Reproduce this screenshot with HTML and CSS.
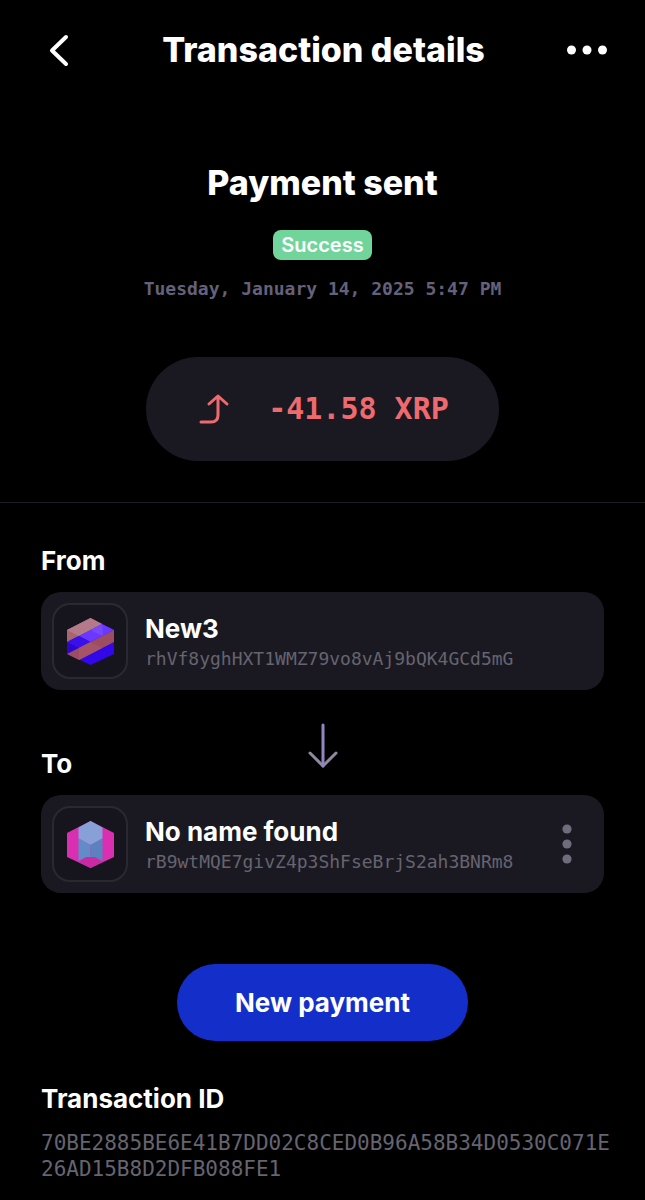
FILE: index.html
```html
<!DOCTYPE html>
<html lang="en">
<head>
<meta charset="utf-8">
<meta name="viewport" content="width=device-width, initial-scale=1">
<title>Transaction details</title>
<link rel="stylesheet" href="styles.css">
</head>
<body>
<header class="topbar">
  <button class="icon-button" type="button" aria-label="Back">
    <svg width="40" height="40" viewBox="0 0 40 40" fill="none" stroke="currentColor" stroke-width="4" stroke-linecap="round" stroke-linejoin="round"><path d="M26 7 12 20.500 26 34"/></svg>
  </button>
  <h1 class="page-title">Transaction details</h1>
  <button class="icon-button" type="button" aria-label="More options">
    <svg width="40" height="40" viewBox="0 0 40 40" fill="currentColor"><circle cx="4.500" cy="20" r="4.500"/><circle cx="20" cy="20" r="4.500"/><circle cx="35.500" cy="20" r="4.500"/></svg>
  </button>
</header>
<main>
  <section class="summary">
    <h2 class="summary-title">Payment sent</h2>
    <span class="badge">Success</span>
    <time class="date" datetime="2025-01-14T17:47">Tuesday, January 14, 2025 5:47 PM</time>
    <div class="amount">
      <svg width="32" height="32" viewBox="0 0 32 32" fill="none" stroke="currentColor" stroke-width="3" stroke-linecap="round" stroke-linejoin="round"><path d="M3 29H13Q20 29 20 22V3M11 11 20 3 29 11"/></svg>
      <span>-41.58 XRP</span>
    </div>
  </section>
  <section class="details">
    <h3 class="label">From</h3>
    <div class="card">
      <div class="avatar">
        <svg width="47" height="47" viewBox="17 17 47 47">
          <path fill="#3208e8" d="M40.500 17 64 29V53L40.500 64 17 53V29Z"/>
          <path fill="#a8646f" d="M17 29 40.500 17 52 23 17 41Z"/>
          <path fill="#b57a8a" d="M17 29 40.500 17 52 23 29 35Z"/>
          <path fill="#6a38ff" d="M52 23 64 29 40.500 41 29 35Z"/>
          <path fill="#7848ff" d="M52 23 53 35 40.500 29Z"/>
          <path fill="#3a10ea" d="M17 41 29 35 40.500 41 17 53Z"/>
          <path fill="#2c06cf" d="M17 41 29 47 17 53Z"/>
          <path fill="#9d4d62" d="M17 53 64 29V41L29 59Z"/>
          <path fill="#a45466" d="M29 47 40.500 41 52 47 29 59Z"/>
        </svg>
      </div>
      <div class="party">
        <span class="party-name">New3</span>
        <span class="address">rhVf8yghHXT1WMZ79vo8vAj9bQK4GCd5mG</span>
      </div>
    </div>
    <div class="to-row">
      <h3 class="label">To</h3>
      <svg class="arrow" width="32" height="46" viewBox="0 0 32 46" fill="none" stroke-width="3" stroke-linecap="round" stroke-linejoin="round"><path stroke="#8f8a9f" d="M3 30 16 43 29 30"/><path stroke="#9385c4" d="M16 2V43"/></svg>
    </div>
    <div class="card">
      <div class="avatar">
        <svg width="47" height="47" viewBox="17 17 47 47">
          <path fill="#d92fb0" d="M40.500 17 64 29V53L40.500 64 17 53V29Z"/>
          <path fill="#c92aa4" d="M28.500 58 36 53H45L52.500 58 40.500 64Z"/>
          <path fill="#87a0d8" d="M40.500 17 52.500 23.500V34.500L40.500 41 28.500 34.500V23.500Z"/>
          <path fill="#628cc8" d="M28.500 34.500 40.500 41V53H36L28.500 57Z"/>
          <path fill="#5a82be" d="M52.500 34.500 40.500 41V53H45L52.500 57Z"/>
        </svg>
      </div>
      <div class="party">
        <span class="party-name">No name found</span>
        <span class="address">rB9wtMQE7givZ4p3ShFseBrjS2ah3BNRm8</span>
      </div>
      <button class="card-menu" type="button" aria-label="Recipient options">
        <svg width="10" height="40" viewBox="0 0 10 40" fill="currentColor"><circle cx="5" cy="5" r="4.600"/><circle cx="5" cy="20" r="4.600"/><circle cx="5" cy="35" r="4.600"/></svg>
      </button>
    </div>
    <button class="primary" type="button">New payment</button>
    <h3 class="label">Transaction ID</h3>
    <p class="hash">70BE2885BE6E41B7DD02C8CED0B96A58B34D0530C071E26AD15B8D2DFB088FE1</p>
  </section>
</main>
</body>
</html>
```
FILE: styles.css
```css
* {
  box-sizing: border-box;
}

body {
  margin: 0;
  background: #000;
  color: #fff;
  font-family: Inter, "Open Sans", sans-serif;
}

h1, h2, h3, p {
  margin: 0;
}

button {
  border: 0;
  padding: 0;
  background: none;
  color: inherit;
  font: inherit;
  cursor: pointer;
}

svg {
  display: block;
}

.topbar {
  display: flex;
  align-items: center;
  justify-content: space-between;
  height: 100px;
  padding: 0 38px 0 40px;
}

.page-title {
  font-size: 34px;
  line-height: 44px;
  font-weight: 800;
}

.summary {
  display: flex;
  flex-direction: column;
  align-items: center;
  padding: 61px 40px 41px;
  border-bottom: 1px solid #202024;
}

.summary-title {
  font-size: 34px;
  line-height: 44px;
  font-weight: 800;
}

.badge {
  margin-top: 25px;
  padding: 0 8px;
  border-radius: 8px;
  background: #71d59b;
  font-size: 20px;
  line-height: 30px;
  font-weight: 600;
}

.date {
  margin-top: 17px;
  color: #65617a;
  font: 700 18px/24px "DejaVu Sans Mono", monospace;
}

.amount {
  display: flex;
  align-items: center;
  gap: 38px;
  margin-top: 56px;
  padding: 0 50px 0 52px;
  border-radius: 52px;
  background: #1a1921;
  color: #ef6a6e;
  font: 700 30px/104px "DejaVu Sans Mono", monospace;
}

.details {
  display: flex;
  flex-direction: column;
  padding: 42px 41px 20px;
}

.label {
  font-size: 26px;
  line-height: 32px;
  font-weight: 700;
}

.card {
  display: flex;
  align-items: center;
  gap: 17px;
  margin-top: 15px;
  padding: 11px;
  border-radius: 20px;
  background: #1a1921;
}

.avatar {
  display: grid;
  place-items: center;
  flex: none;
  width: 76px;
  height: 76px;
  border: 2px solid #2a2931;
  border-radius: 18px;
  background: #16151e;
}

.party {
  display: flex;
  flex: 1;
  flex-direction: column;
  min-width: 0;
  padding-top: 4px;
}

.party-name {
  font-size: 26px;
  line-height: 32px;
  font-weight: 700;
}

.address {
  color: #66646f;
  font: 18px/28px "DejaVu Sans Mono", monospace;
  overflow-wrap: anywhere;
}

.card-menu {
  margin-right: 21px;
  color: #6f6c7c;
}

.to-row {
  display: grid;
  grid-template-columns: 1fr auto 1fr;
  align-items: end;
  margin-top: 33px;
}

.arrow {
  margin-bottom: 11px;
}

.primary {
  align-self: center;
  margin: 71px 0 42px;
  padding: 0 58px;
  border-radius: 39px;
  background: #142fc9;
  font-size: 26px;
  line-height: 77px;
  font-weight: 700;
}

.hash {
  margin: 15px -8px 0 0;
  color: #66646f;
  font: 21px/26px "DejaVu Sans Mono", monospace;
  overflow-wrap: anywhere;
}
```
